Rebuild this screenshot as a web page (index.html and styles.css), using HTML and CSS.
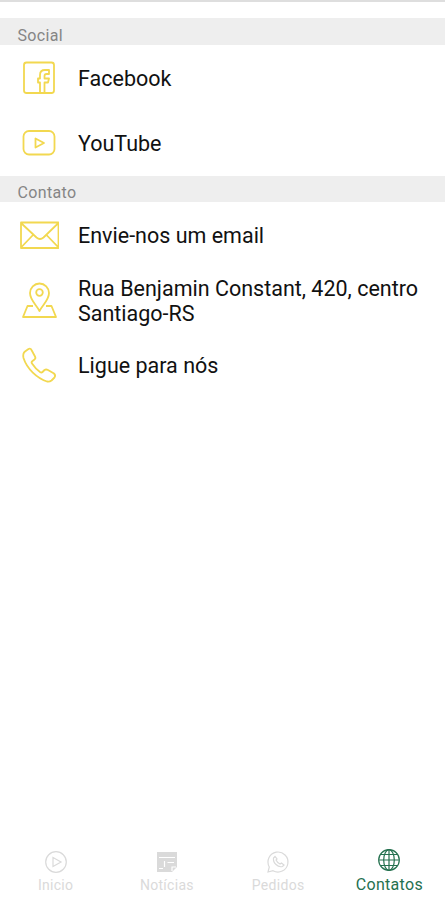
FILE: index.html
```html
<!DOCTYPE html>
<html lang="pt-BR">
<head>
  <meta charset="utf-8">
  <title>Contatos</title>
  <link rel="stylesheet" href="styles.css">
</head>
<body>
  <main class="content">
    <h2 class="section">Social</h2>
    <a class="row">
      <svg class="icon" viewBox="0 0 40 40">
        <rect x="5" y="4.5" width="30" height="30.5" rx="2.5"/>
        <path d="M21 35V24.5H19V20.500H21V17Q21 12 26 12H30V16H27.500Q25.500 16 25.500 18V20.500H30L29 24.500H25.500V35"/>
      </svg>
      <span class="label">Facebook</span>
    </a>
    <a class="row">
      <svg class="icon" viewBox="0 0 40 40">
        <rect x="4.500" y="8" width="31" height="23.500" rx="5.500"/>
        <path d="M16.500 15.500V24.500L25 20Z"/>
      </svg>
      <span class="label">YouTube</span>
    </a>

    <h2 class="section">Contato</h2>
    <a class="row">
      <svg class="icon" viewBox="0 0 40 40">
        <path d="M2 7.500H39.500V33H2ZM2 8L17.500 22.500Q21 25.500 24.500 22.500L39.500 8M2 32.500L14 20M39.500 32.500L27.500 20"/>
      </svg>
      <span class="label">Envie-nos um email</span>
    </a>
    <a class="row">
      <svg class="icon" viewBox="0 0 40 40">
        <path d="M20.500 31C17.500 25 11 20 11 13A9.500 9.500 0 0 1 30 13C30 20 23.500 25 20.500 31Z"/>
        <circle cx="20.500" cy="12.500" r="3.300"/>
        <path d="M14 26H8.500L4 37H37L32.500 26H27"/>
      </svg>
      <span class="label">Rua Benjamin Constant, 420, centro<br>Santiago-RS</span>
    </a>
    <a class="row">
      <svg class="icon" viewBox="0 0 40 40">
        <path d="M9.500 4L6 6.500Q3.500 8.500 4.500 13C8 24 18 33 28 36.500Q30.500 37 32.500 35.500L35.500 32.500Q37 30.500 35 28.500L29 25Q27 24 25.500 25L23.500 27Q22.500 28 21 27C17.500 24.500 15 21.500 13 18.500Q12 17 13.500 16L15.500 14.500Q17 13.500 16 11.500L12.500 5Q11.500 3 9.500 4Z"/>
      </svg>
      <span class="label">Ligue para nós</span>
    </a>
  </main>

  <nav class="tabs">
    <a class="tab">
      <svg class="tab-icon" viewBox="0 0 24 24">
        <circle cx="12" cy="12" r="10.300"/>
        <path d="M9 7.500V16.500L17 12Z"/>
      </svg>
      <span>Inicio</span>
    </a>
    <a class="tab">
      <svg class="tab-icon news" viewBox="0 0 24 24">
        <path class="sheet" d="M2 2H22V17L17 22H2Z"/>
        <path class="gap" d="M4 7.500H20M9.500 11V17M12.500 12.500H19M4 18.500H8M17 21V17H21"/>
      </svg>
      <span>Notícias</span>
    </a>
    <a class="tab">
      <svg class="tab-icon" viewBox="0 0 24 24">
        <path d="M2 22L3.300 17A10 10 0 1 1 7 20.700Z"/>
        <path d="M9 6.500L7.500 8Q7 12 10 14.500Q13 17.500 16.500 16.500L18 15L15.500 13L14 14Q11.500 13 10 10L11 9Z"/>
      </svg>
      <span>Pedidos</span>
    </a>
    <a class="tab active">
      <svg class="tab-icon" viewBox="0 0 24 24">
        <circle cx="12" cy="12" r="10.300"/>
        <ellipse cx="12" cy="12" rx="5.300" ry="10.300"/>
        <path d="M12 2V22M2 12H22M3.500 6.500H20.500M3.500 17.500H20.500"/>
      </svg>
      <span>Contatos</span>
    </a>
  </nav>
</body>
</html>
```
FILE: styles.css
```css
* {
  box-sizing: border-box;
}
body {
  margin: 0;
  height: 900px;
  display: flex;
  flex-direction: column;
  overflow: hidden;
  background: #fff;
  border-top: 2px solid #dedede;
  font-family: Roboto, sans-serif;
}
.content {
  flex: 1;
  padding-top: 16px;
}
.section {
  height: 27px;
  margin: 0;
  padding: 4px 0 0 17.5px;
  background: #eee;
  color: #858585;
  font-size: 16px;
  font-weight: 400;
  line-height: 27px;
  letter-spacing: 0.35px;
}
.row {
  display: flex;
  align-items: center;
  height: 65px;
  padding-left: 19px;
}
.row + .section {
  height: 26px;
  margin-top: 1px;
  padding-top: 3px;
}
.icon {
  width: 40px;
  height: 40px;
  margin-right: 19px;
  flex-shrink: 0;
  fill: none;
  stroke: #f2d850;
  stroke-width: 1.8;
  stroke-linejoin: round;
}
.label {
  padding-top: 2px;
  color: #111;
  font-size: 21.5px;
  line-height: 25px;
  white-space: nowrap;
}
.tabs {
  display: flex;
  height: 60px;
}
.tab {
  flex: 1;
  display: flex;
  flex-direction: column;
  align-items: center;
  padding-top: 10px;
  color: #dadada;
  font-size: 14px;
  line-height: 18px;
  letter-spacing: 0.3px;
}
.tab-icon {
  width: 24px;
  height: 24px;
  margin-bottom: 2px;
  fill: none;
  stroke: currentColor;
  stroke-width: 1.2;
}
.news .sheet {
  fill: currentColor;
  stroke: none;
}
.news .gap {
  stroke: #fff;
}
.active {
  padding-top: 8px;
  color: #25714f;
  font-size: 16px;
  letter-spacing: 0.3px;
}
.active .tab-icon {
  margin-bottom: 4px;
}
```
